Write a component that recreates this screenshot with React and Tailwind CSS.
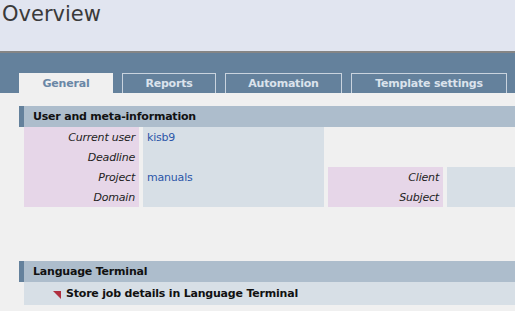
export default function App() {
  const font = { fontFamily: '"DejaVu Sans", Verdana, sans-serif' };
  const label = "bg-[#e6d6e8] italic text-right pr-[4px] pt-[2px] leading-[18px] text-[#222]";
  return (
    <div className="w-[515px] h-[311px] overflow-hidden bg-[#f0f0f0]" style={font}>
      <div className="h-[51px] bg-[#e1e5f0] pl-[2px] pt-[1px]">
        <div className="text-[21px] leading-[26px] text-[#3a3a3a]">Overview</div>
      </div>
      <div className="h-[2px] bg-[#858585]" />
      <div className="h-[40px] bg-[#64819c] flex items-end pl-[19px] gap-[9px] text-[11px] font-bold tracking-[-0.2px]">
        <div className="w-[94px] h-[20px] bg-[#f0f0f0] flex items-center justify-center pt-[2px] text-[#6a87a6]">General</div>
        <div className="w-[94px] h-[20px] border border-b-0 border-[#c9d3de] flex items-center justify-center pt-[2px] text-[#dbe3ec]">Reports</div>
        <div className="w-[117px] h-[20px] border border-b-0 border-[#c9d3de] flex items-center justify-center pt-[2px] text-[#dbe3ec]">Automation</div>
        <div className="w-[156px] h-[20px] border border-b-0 border-[#c9d3de] flex items-center justify-center pt-[2px] text-[#dbe3ec]">Template settings</div>
      </div>
      <div className="pl-[19px] pt-[13px] text-[11px] tracking-[-0.2px]">
        <div className="h-[21px] bg-[#adbdcc] border-l-[5px] border-[#64819c] flex items-center pl-[9px] pt-[2px] font-bold text-[#111]">User and meta-information</div>
        <div className="pl-[5px] grid grid-cols-[115px_181px_115px_68px] gap-x-1 grid-rows-[20px_20px_20px_20px]">
          <div className={label}>Current user</div>
          <div className="bg-[#d7dfe6] pl-[4px] leading-[18px] text-[#2b56a8] row-span-4">
            <div className="h-[20px] pt-[2px]">kisb9</div>
            <div className="h-[20px]"></div>
            <div className="h-[20px] pt-[2px]">manuals</div>
          </div>
          <div className="col-span-2"></div>
          <div className={label}>Deadline</div>
          <div className="col-span-2"></div>
          <div className={label}>Project</div>
          <div className={label}>Client</div>
          <div className="bg-[#d7dfe6] row-span-2"></div>
          <div className={label}>Domain</div>
          <div className={label}>Subject</div>
        </div>
        <div className="h-[54px]" />
        <div className="h-[21px] bg-[#adbdcc] border-l-[5px] border-[#64819c] flex items-center pl-[9px] pt-[2px] font-bold text-[#111]">Language Terminal</div>
        <div className="ml-[5px] h-[23px] bg-[#d7dfe6] flex items-center pl-[29px] pt-[2px] font-bold text-[#111]">
          <svg width="8" height="8" viewBox="0 0 8 8" className="mr-[5px] shrink-0">
            <polygon points="0,0 8,0 8,8" fill="#b03040" />
          </svg>
          Store job details in Language Terminal
        </div>
      </div>
    </div>
  );
}
